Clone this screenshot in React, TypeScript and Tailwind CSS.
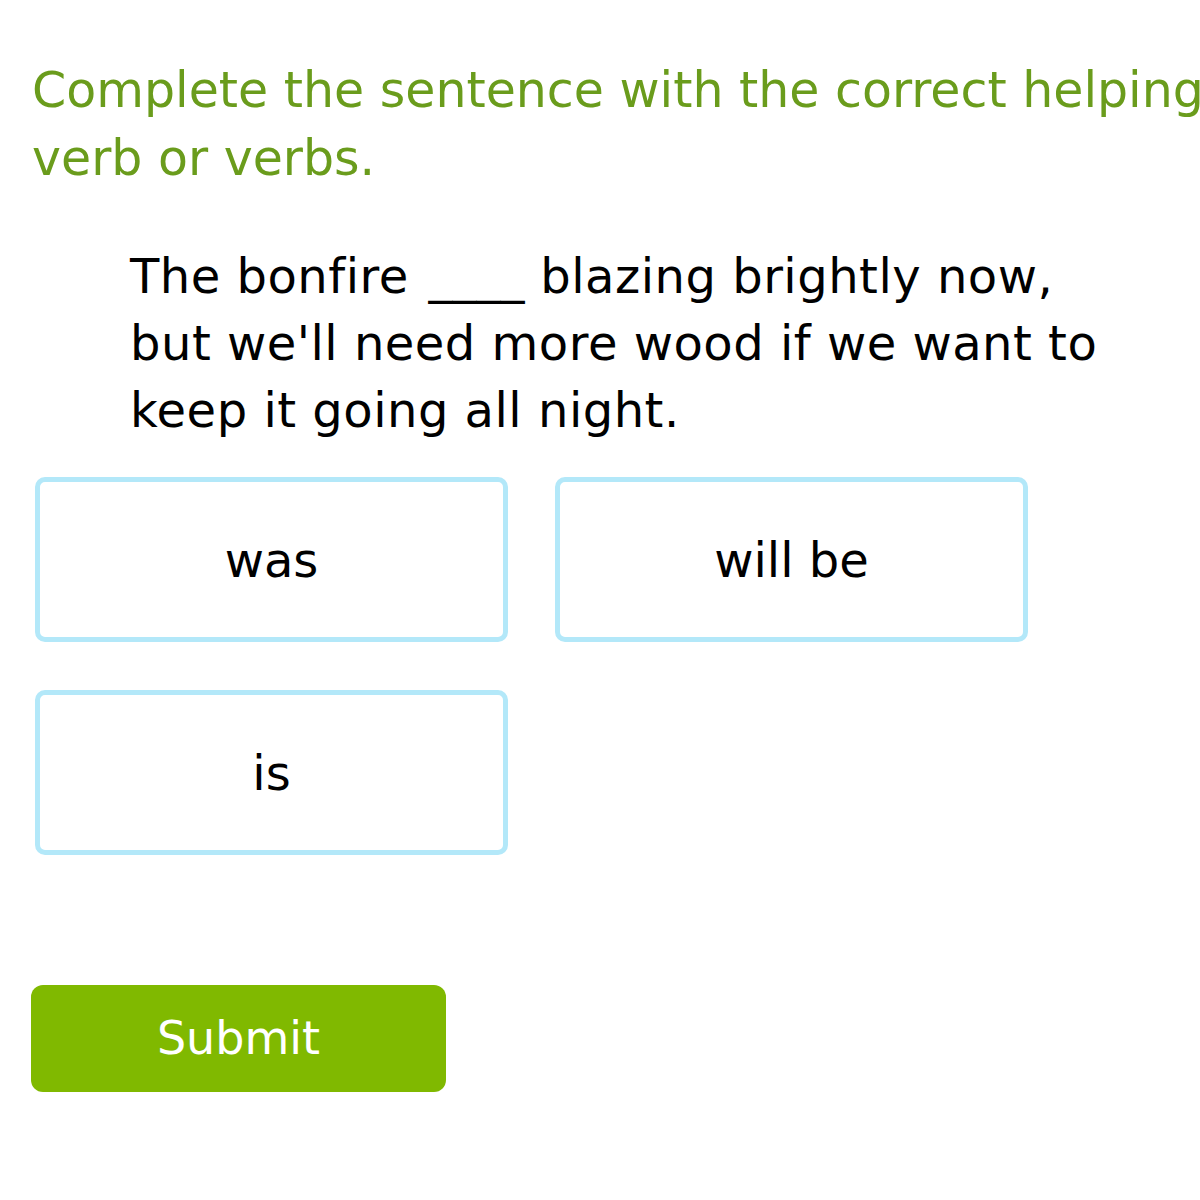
const options = ['was', 'will be', 'is'];

export default function App() {
  return (
    <div className="w-[1200px] h-[1200px] overflow-hidden bg-white font-['DejaVu_Sans',Verdana,sans-serif] [font-variant-ligatures:none]">
      <div className="w-[1260px] pt-[57px] pl-[32px]">
        <h1 className="text-[49px] leading-[68px] text-[#6a9c1c] font-normal">
          Complete the sentence with the correct helping verb or verbs.
        </h1>
      </div>

      <p className="mt-[50px] ml-[130px] w-[990px] text-[48px] leading-[67px] tracking-[0.5px] text-black">
        The bonfire <span className="inline-block ml-[4px] tracking-normal">____</span> blazing brightly now, but we'll need more wood if we want to keep it going all night.
      </p>

      <div className="mt-[33px] ml-[35px] grid grid-cols-[473px_473px] gap-x-[47px] gap-y-[48px]">
        {options.map((opt) => (
          <button
            key={opt}
            className="h-[165px] border-[5px] border-[#b3e8f9] rounded-[10px] bg-white flex items-center justify-center text-[48px] text-black"
          >
            {opt}
          </button>
        ))}
      </div>

      <button className="mt-[130px] ml-[31px] w-[415px] h-[107px] rounded-[12px] bg-[#80b900] text-white text-[46px] flex items-center justify-center">
        Submit
      </button>
    </div>
  );
}
